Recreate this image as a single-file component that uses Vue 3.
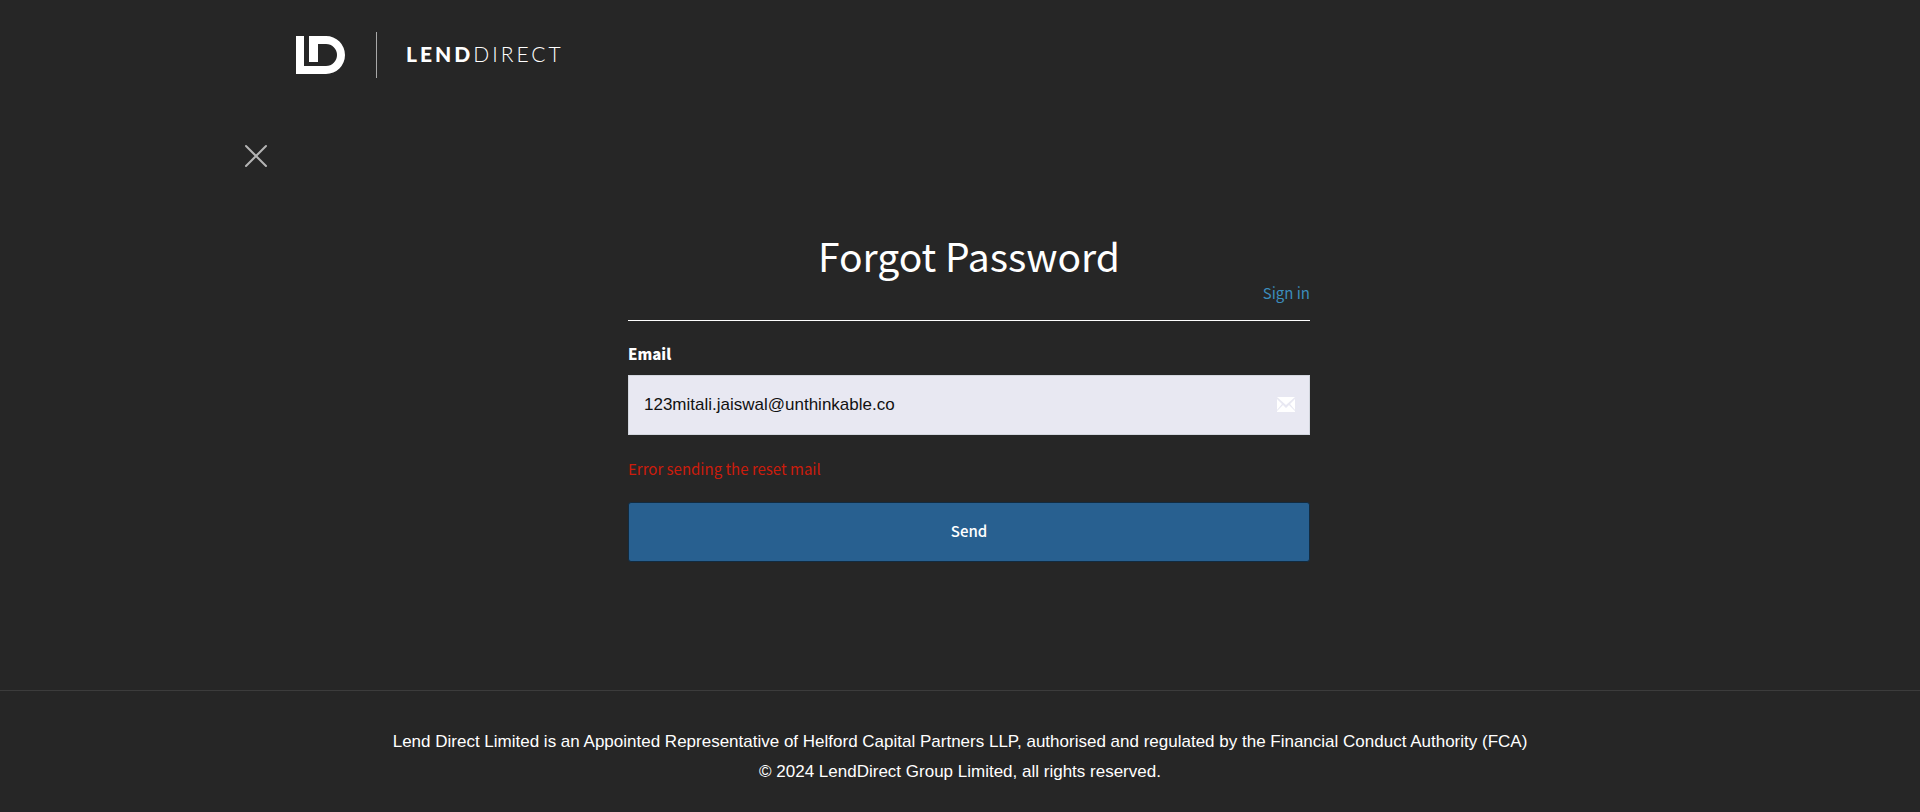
<script setup>
import { ref } from 'vue'

const email = ref('123mitali.jaiswal@unthinkable.co')
const error = ref('Error sending the reset mail')
</script>

<template>
  <div class="page">
    <header class="header">
      <svg class="mark" viewBox="0 0 49 38" role="img" aria-label="LD">
        <path d="M0 0H8V30H30A11 11 0 0 0 30 8H22V26H13V0H30A19 19 0 0 1 30 38H0Z" fill="#fff" />
      </svg>
      <span class="divider"></span>
      <span class="wordmark"><b>LEND</b>DIRECT</span>
    </header>

    <main class="main">
      <button class="close" type="button" aria-label="Close">
        <svg viewBox="0 0 24 24" aria-hidden="true">
          <path d="M2 2L22 22M22 2L2 22" fill="none" stroke="#b4b4b4" stroke-width="2" stroke-linecap="round" />
        </svg>
      </button>

      <form class="form" @submit.prevent>
        <h1>Forgot Password</h1>
        <div class="links"><a href="#">Sign in</a></div>
        <label for="email">Email</label>
        <div class="field">
          <input id="email" v-model="email" type="email" />
          <svg class="envelope" viewBox="0 0 18 15" aria-hidden="true">
            <path d="M0 0H18L9 8ZM0 2L5 7L0 13ZM18 2L13 7L18 13ZM6 8L9 11L12 8L18 14V15H0V14Z" fill="#fff" />
          </svg>
        </div>
        <p class="error">{{ error }}</p>
        <button class="send" type="submit">Send</button>
      </form>
    </main>

    <footer class="footer">
      <p>Lend Direct Limited is an Appointed Representative of Helford Capital Partners LLP, authorised and regulated by the Financial Conduct Authority (FCA)</p>
      <p>© 2024 LendDirect Group Limited, all rights reserved.</p>
    </footer>
  </div>
</template>

<style>
body {
  margin: 0;
  background: #262626;
}
</style>

<style scoped>
* {
  box-sizing: border-box;
}
.page {
  display: flex;
  flex-direction: column;
  min-height: 100vh;
  color: #fff;
  font-family: "Noto Sans CJK SC", "Noto Sans", sans-serif;
  font-size: 15px;
  line-height: 24px;
}
.header {
  display: flex;
  align-items: center;
  width: 100%;
  max-width: 1328px;
  margin: 0 auto;
  padding: 32px 0 0;
}
.mark {
  width: 49px;
  height: 38px;
}
.divider {
  width: 1px;
  height: 46px;
  margin: 0 29px 0 31px;
  background: #a8a8a8;
}
.wordmark {
  padding-bottom: 2px;
  font-family: Lato, sans-serif;
  font-size: 21px;
  font-weight: 300;
  letter-spacing: 3px;
}
.wordmark b {
  font-weight: 900;
}
.main {
  flex: 1;
  width: 100%;
  max-width: 1432px;
  margin: 0 auto;
  padding-top: 66px;
}
.close {
  display: block;
  width: 24px;
  height: 24px;
  padding: 0;
  border: 0;
  background: none;
  cursor: pointer;
}
.close svg {
  display: block;
}
.form {
  display: flex;
  flex-direction: column;
  max-width: 700px;
  margin: 63px auto 0;
  padding-left: 18px;
}
h1 {
  margin: 0 0 2px;
  font-size: 39px;
  font-weight: 400;
  line-height: 48px;
  text-align: center;
}
.links {
  padding-bottom: 15px;
  border-bottom: 1px solid #fff;
  text-align: right;
}
a {
  color: #3c8dbc;
  text-decoration: none;
}
label {
  margin: 21px 0 9px;
  font-weight: 900;
}
.field {
  position: relative;
}
input {
  display: block;
  width: 100%;
  height: 60px;
  padding: 0 48px 0 15px;
  border: 1px solid #d2d6de;
  border-radius: 0;
  outline: 0;
  background: #e8e8f2;
  color: #111;
  font-family: "Liberation Sans", Arial, sans-serif;
  font-size: 17px;
}
.envelope {
  position: absolute;
  top: 22px;
  right: 15px;
  width: 18px;
  height: 15px;
}
.error {
  margin: 22px 0 21px;
  color: #cc1c0c;
}
.send {
  height: 60px;
  padding: 0 16px 2px;
  border: 1px solid #122b40;
  border-radius: 3px;
  background: #286090;
  color: #fff;
  font: inherit;
  font-weight: 500;
  cursor: pointer;
}
.footer {
  padding: 36px 16px 25px;
  border-top: 1px solid #3c3c3c;
  font-family: "Liberation Sans", Arial, sans-serif;
  font-size: 17px;
  line-height: 30px;
  text-align: center;
}
.footer p {
  margin: 0;
}
</style>
